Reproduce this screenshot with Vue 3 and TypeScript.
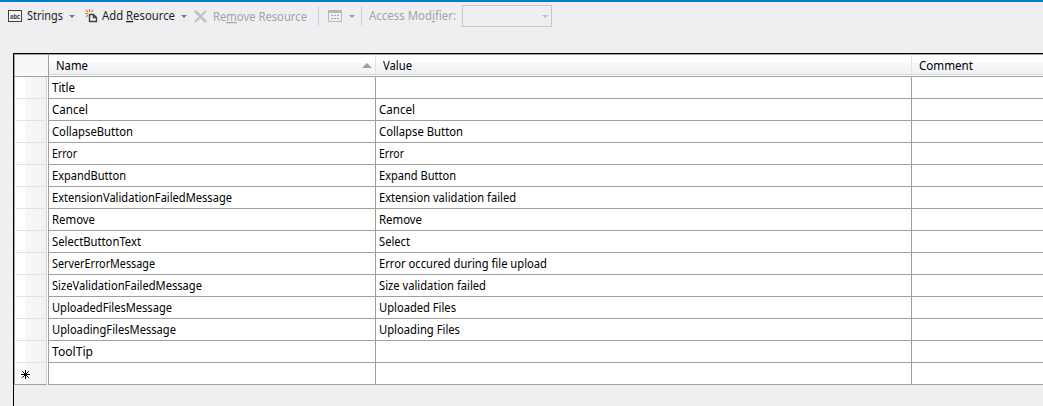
<script setup lang="ts">
interface Entry { name: string; value: string; nameWidth: number; valueWidth: number }

const entries: Entry[] = [
  { name: 'Title', value: '', nameWidth: 23, valueWidth: 0 },
  { name: 'Cancel', value: 'Cancel', nameWidth: 36, valueWidth: 36 },
  { name: 'CollapseButton', value: 'Collapse Button', nameWidth: 81, valueWidth: 84 },
  { name: 'Error', value: 'Error', nameWidth: 25, valueWidth: 25 },
  { name: 'ExpandButton', value: 'Expand Button', nameWidth: 74, valueWidth: 77 },
  { name: 'ExtensionValidationFailedMessage', value: 'Extension validation failed', nameWidth: 180, valueWidth: 137 },
  { name: 'Remove', value: 'Remove', nameWidth: 43, valueWidth: 43 },
  { name: 'SelectButtonText', value: 'Select', nameWidth: 89, valueWidth: 31 },
  { name: 'ServerErrorMessage', value: 'Error occured during file upload', nameWidth: 103, valueWidth: 168 },
  { name: 'SizeValidationFailedMessage', value: 'Size validation failed', nameWidth: 150, valueWidth: 107 },
  { name: 'UploadedFilesMessage', value: 'Uploaded Files', nameWidth: 120, valueWidth: 77 },
  { name: 'UploadingFilesMessage', value: 'Uploading Files', nameWidth: 124, valueWidth: 81 },
  { name: 'ToolTip', value: '', nameWidth: 41, valueWidth: 0 },
]
</script>

<template>
  <div class="designer">
    <div class="toolbar">
      <svg class="abc" width="14" height="12" viewBox="0 0 14 12">
        <rect x=".5" y=".5" width="13" height="11" fill="#f6f6f8" stroke="#424242" />
        <text x="2" y="8.5" textLength="10" lengthAdjust="spacingAndGlyphs">abc</text>
      </svg>
      <svg class="label strings" width="38" height="18"><text x="0" y="13" textLength="36" lengthAdjust="spacingAndGlyphs">Strings</text></svg>
      <i class="arrow a1"></i>
      <svg class="add" width="13" height="14" viewBox="0 0 13 14" fill="none">
        <path d="M4.5 0v3M1 1l2 2M8 1L6 3M0 4.5h3M1 8l2-2" stroke="#c08a3e" stroke-width="1.2" />
        <path d="M4.5 12.5v-7h4l3 3v4zM8.5 5.5v3h3" stroke="#424242" stroke-width="1.4" />
      </svg>
      <svg class="label addtext" width="76" height="18"><text x="0" y="13" textLength="73" lengthAdjust="spacingAndGlyphs">Add <tspan class="key">R</tspan>esource</text></svg>
      <i class="arrow a2"></i>
      <svg class="cross" width="13" height="13" viewBox="0 0 13 13">
        <path d="M1 1l11 11" stroke="#c2c2c4" stroke-width="2.8" />
        <path d="M12 1L1 12" stroke="#c2c2c4" stroke-width="1.9" />
      </svg>
      <svg class="label removetext dim" width="97" height="18"><text x="0" y="14" textLength="94" lengthAdjust="spacingAndGlyphs">Re<tspan class="key">m</tspan>ove Resource</text></svg>
      <i class="sep s1"></i>
      <svg class="grid-icon" width="14" height="12" viewBox="0 0 14 12" shape-rendering="crispEdges">
        <path d="M0 0h14v12H0zM1 3v8h12V3z" fill="#b8b8bb" fill-rule="evenodd" />
        <path d="M3 5h2v1H3zM6 5h2v1H6zM9 5h2v1H9zM3 8h2v1H3zM6 8h2v1H6zM9 8h2v1H9z" fill="#a5a5a8" />
      </svg>
      <i class="arrow a3"></i>
      <i class="sep s2"></i>
      <svg class="label access dim" width="89" height="18"><text x="0" y="13" textLength="87" lengthAdjust="spacingAndGlyphs">Access Mod<tspan class="key">i</tspan>fier:</text></svg>
      <div class="combo"><i class="arrow a4"></i></div>
    </div>

    <div class="sheet">
      <div class="row head">
        <div class="corner"></div>
        <div class="cell name"><svg class="label" width="200" height="18"><text x="0" y="13" textLength="32" lengthAdjust="spacingAndGlyphs">Name</text></svg><i class="sort"></i></div>
        <div class="cell value"><svg class="label" width="200" height="18"><text x="0" y="13" textLength="29" lengthAdjust="spacingAndGlyphs">Value</text></svg></div>
        <div class="cell comment"><svg class="label" width="100" height="18"><text x="0" y="13" textLength="54" lengthAdjust="spacingAndGlyphs">Comment</text></svg></div>
      </div>
      <div v-for="entry in entries" :key="entry.name" class="row">
        <div class="marker"></div>
        <div class="cell name"><svg class="label" width="240" height="18"><text x="0" y="13" :textLength="entry.nameWidth" lengthAdjust="spacingAndGlyphs">{{ entry.name }}</text></svg></div>
        <div class="cell value"><svg v-if="entry.value" class="label" width="240" height="18"><text x="0" y="13" :textLength="entry.valueWidth" lengthAdjust="spacingAndGlyphs">{{ entry.value }}</text></svg></div>
        <div class="cell comment"></div>
      </div>
      <div class="row">
        <div class="marker">
          <svg class="star" width="9" height="9" viewBox="0 0 9 9" stroke="#000"><path d="M4.5 0v9M0 4.5h9M1.2 1.2l6.6 6.6M7.8 1.2L1.2 7.8" /></svg>
        </div>
        <div class="cell name"></div>
        <div class="cell value"></div>
        <div class="cell comment"></div>
      </div>
    </div>
  </div>
</template>

<style>
body { margin: 0; overflow: hidden; }
</style>

<style scoped>
.designer { box-sizing: border-box; width: 1043px; height: 406px; overflow: hidden; background: #efeff0; border-top: 2px solid #007acc; font: 12px "Noto Sans", "Open Sans", sans-serif; }
.designer * { box-sizing: border-box; }
svg { display: block; flex: none; }
.label { overflow: visible; fill: #000; font-size: 12px; }
.abc text { font-size: 7.5px; font-weight: 700; fill: #424242; }
.toolbar { display: flex; align-items: center; height: 28px; padding-left: 8px; background: #efeff2; }
.toolbar .label { font-size: 12.5px; fill: #1e1e1e; }
.toolbar .dim { fill: #a2a4a5; }
.key { text-decoration: underline; }
.strings { margin-left: 5px; }
.arrow { flex: none; width: 0; height: 0; border: 3px solid transparent; border-top-color: #717171; border-bottom: 0; }
.a1 { margin-left: 4px; }
.add { margin-left: 10px; }
.addtext { margin-left: 4px; }
.a2 { margin-left: 3px; }
.cross { margin-left: 7px; }
.removetext { margin-left: 6px; }
.sep { flex: none; width: 1px; height: 20px; background: #cccedb; }
.s1 { margin-left: 8px; }
.grid-icon { margin-left: 9px; }
.a3 { margin-left: 7px; border-top-color: #999; }
.s2 { margin-left: 6px; }
.access { margin-left: 7px; }
.combo { display: flex; flex: none; align-items: center; justify-content: flex-end; width: 90px; height: 22px; margin-left: 4px; padding-right: 3px; border: 1px solid #c6c6c9; }
.a4 { border-top-color: #bbb; }
.sheet { width: 1030px; height: 353px; margin: 23px 0 0 13px; border-top: 1px solid #000; border-left: 1px solid #000; }
.row { display: grid; grid-template-columns: 34px 327px 536px 132px; height: 22px; }
.cell { display: flex; align-items: center; padding-left: 3px; background: #fff; border-left: 1px solid #a0a0a0; border-bottom: 1px solid #a0a0a0; }
.marker { display: flex; align-items: center; padding-left: 6px; margin-right: 1px; border-left: 1px solid #a0a0a0; border-right: 1px solid #d5d5d5; border-bottom: 1px solid #e1e3e5; background: linear-gradient(90deg, #fff 10px, #f7f8fa 10px, #f1f2f4); box-shadow: 1px 0 #fff; }
.row:last-child .marker { padding-top: 2px; border-bottom-color: #a0a0a0; }
.head { height: 23px; }
.corner { border-top: 1px solid #a0a0a0; border-left: 1px solid #a0a0a0; border-bottom: 1px solid #a0a0a0; background: #f7f8fa; }
.head .cell { padding-left: 7px; padding-bottom: 0; border-top: 1px solid #a0a0a0; border-left-color: #e2e3e5; background: linear-gradient(#d5d5d5, #d5d5d5) 0 19px / 100% 1px no-repeat, linear-gradient(#fff 8px, #f7f8fa 8px, #f1f2f4 19px, #fff 20px); }
.head .name { border-left-color: #a0a0a0; }
.sort { width: 0; height: 0; margin-left: auto; margin-right: 3px; border: 5px solid transparent; border-top: 0; border-bottom-color: #a0a0a0; }
</style>
